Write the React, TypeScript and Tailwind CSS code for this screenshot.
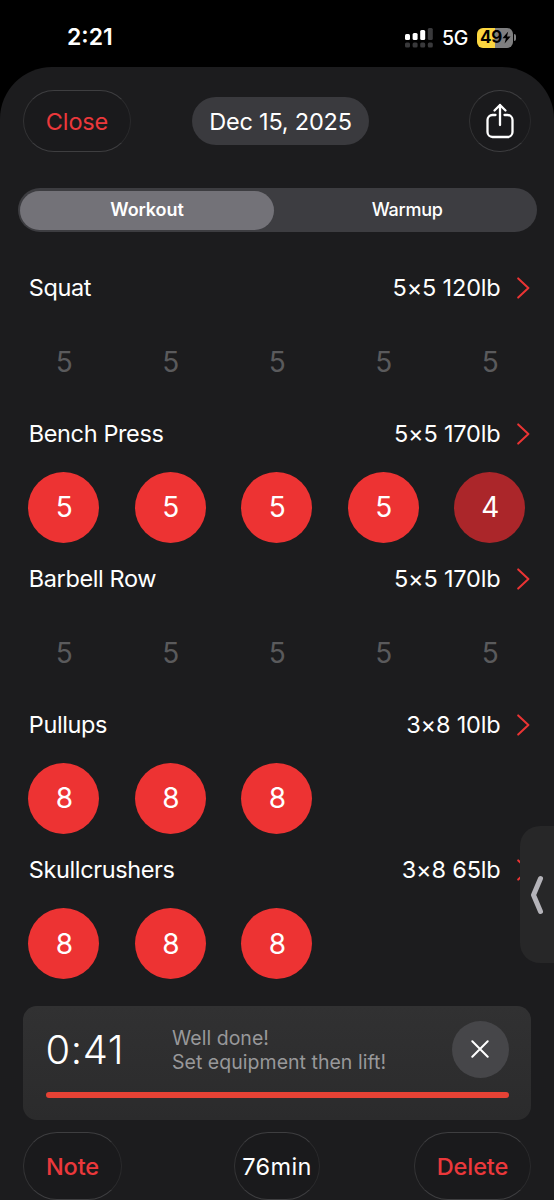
import { useState } from "react";
import { clsx } from "clsx";

type SetState = { reps: number; status: "todo" | "done" | "missed" };
type Exercise = { name: string; load: string; sets: SetState[] };

const repeat = (count: number, reps: number, status: SetState["status"]): SetState[] =>
  Array.from({ length: count }, () => ({ reps, status }));

const EXERCISES: Exercise[] = [
  { name: "Squat", load: "5×5 120lb", sets: repeat(5, 5, "todo") },
  { name: "Bench Press", load: "5×5 170lb", sets: [...repeat(4, 5, "done"), { reps: 4, status: "missed" }] },
  { name: "Barbell Row", load: "5×5 170lb", sets: repeat(5, 5, "todo") },
  { name: "Pullups", load: "3×8 10lb", sets: repeat(3, 8, "done") },
  { name: "Skullcrushers", load: "3×8 65lb", sets: repeat(3, 8, "done") },
];

const glassCls =
  "flex shrink-0 items-center justify-center border border-t-[#3e3e40] border-r-[#2a2a2c] border-b-[#3e3e40] border-l-[#333335] bg-[#1a1a1c]";

function StatusBar() {
  return (
    <div className="flex h-[67px] items-center justify-between pt-2 pr-[38.5px] pl-[67px] text-white">
      <span className="text-[23px] font-semibold">2:21</span>
      <div className="flex items-center">
        <svg width="28" height="20" viewBox="0 0 28 20" fill="#fff">
          <rect x="0" y="6" width="5" height="6" rx="1.5" />
          <rect x="7.6" y="5" width="5" height="7" rx="1.5" />
          <rect x="15.2" y="2" width="5" height="10" rx="1.5" />
          <rect x="22.8" y="0" width="5" height="12" rx="1.5" fill="#39393b" />
          {[0, 7.6, 15.2, 22.8].map((x) => (
            <rect key={x} x={x} y="14.5" width="5" height="5" rx="1.5" fill="#39393b" />
          ))}
        </svg>
        <span className="ml-[9px] w-[26px] pt-0.5 text-[19.5px] font-medium tracking-[-0.4px]">5G</span>
        <div className="mr-px ml-[9px] flex h-5 w-[35.5px] items-center overflow-hidden rounded-[6px] bg-linear-to-r from-[#fbd640] from-50% to-[#7f7f80] to-50% pl-[3px] text-black">
          <span className="text-[17px] font-bold tracking-[-0.3px]">49</span>
          <svg width="9" height="13" viewBox="0 0 9 13" className="shrink-0">
            <path d="M6.2 0.5 0.4 7.2h3.5L2.6 12.5 8.6 5.5H5z" />
          </svg>
        </div>
        <span className="h-[7px] w-[2px] rounded-r-full bg-[#7f7f80]" />
      </div>
    </div>
  );
}

function Chevron() {
  return (
    <svg width="13" height="22" viewBox="0 0 13 22" fill="none" stroke="#eb3434" strokeWidth="2" strokeLinecap="round" strokeLinejoin="round">
      <path d="M1.2 1.4 11.4 11 1.2 20.6" />
    </svg>
  );
}

function ExerciseRow({ name, load, sets }: Exercise) {
  return (
    <div className="h-[145.5px]">
      <div className="flex h-[76px] items-center pl-[0.5px] text-[23.5px] text-white">
        <span className="tracking-[-0.38px]">{name}</span>
        <span className="mr-[16px] ml-auto tracking-[-0.18px]">{load}</span>
        <Chevron />
      </div>
      <div className="flex gap-[35.5px]">
        {sets.map((s, i) => (
          <div
            key={i}
            className={clsx(
              "flex size-[71px] shrink-0 items-center justify-center rounded-full pl-px text-[28px]",
              s.status === "todo" && "text-[#5a5a5c]",
              s.status === "done" && "bg-[#ed3333] text-white",
              s.status === "missed" && "bg-[#ab262a] text-white",
            )}
          >
            {s.reps}
          </div>
        ))}
      </div>
    </div>
  );
}

function RestTimer() {
  return (
    <div className="mx-[23px] h-[114px] shrink-0 rounded-[14px] bg-linear-to-b from-[#313132] to-[#2b2b2c] px-[22.5px] pt-[15px]">
      <div className="flex h-14 items-center">
        <span className="w-[126.5px] pt-0.5 text-[40px] leading-none font-[350] tracking-[0.6px] text-white">0:41</span>
        <p className="pt-px text-[19.5px] leading-6 tracking-[0.03px] text-[#98989a]">
          Well done!
          <br />
          Set equipment then lift!
        </p>
        <button className="ml-auto flex size-[57px] items-center justify-center rounded-full bg-[#464649]">
          <svg width="18" height="18" viewBox="0 0 18 18" stroke="#fff" strokeWidth="2" strokeLinecap="round">
            <path d="M1.3 1.3 16.7 16.7M16.7 1.3 1.3 16.7" />
          </svg>
        </button>
      </div>
      <div className="mt-[15px] h-[6px] rounded-full bg-[#e64235]" />
    </div>
  );
}

export default function App() {
  const [tab, setTab] = useState("Workout");
  return (
    <div className="relative h-[1200px] w-[554px] overflow-hidden bg-black font-[Inter,sans-serif]">
      <StatusBar />
      <div className="flex h-[1133px] flex-col rounded-t-[52px] bg-[#1c1c1e]">
        <header className="flex h-[121px] shrink-0 items-start justify-between px-[23px] pt-[23px]">
          <button className={clsx(glassCls, "h-[62px] w-[108px] rounded-full pt-0.5 text-[23.5px] tracking-[-0.15px] text-[#eb383b]")}>
            Close
          </button>
          <div className="mt-[7px] mr-[38px] ml-auto flex h-[48px] w-[177px] items-center justify-center rounded-full bg-[#3a3a3e] pt-0.5 text-[23.5px] tracking-[-0.22px] text-white">
            Dec 15, 2025
          </div>
          <button className={clsx(glassCls, "ml-[62px] size-[62px] rounded-full")}>
            <svg width="28" height="36" viewBox="0 0 28 36" fill="none" stroke="#fff" strokeWidth="2.3" strokeLinecap="round" strokeLinejoin="round">
              <path d="M9.5 12H6.5A5 5 0 0 0 1.5 17V29A5 5 0 0 0 6.5 34H21.5A5 5 0 0 0 26.5 29V17A5 5 0 0 0 21.5 12H18.5" />
              <path d="M14 22V2M8.5 7.5 14 2 19.5 7.5" />
            </svg>
          </button>
        </header>
        <div className="mr-[17px] ml-[17.5px] flex h-[44px] shrink-0 rounded-full bg-[#3d3d41] p-[2.5px]">
          {["Workout", "Warmup"].map((t) => (
            <button
              key={t}
              onClick={() => setTab(t)}
              className={clsx(
                "h-full rounded-full text-lg text-white",
                tab === t ? "w-[254px] bg-[#737278] font-semibold tracking-[-0.1px]" : "flex-1 pl-1.5 font-medium tracking-[-0.25px]",
              )}
            >
              {t}
            </button>
          ))}
        </div>
        <main className="h-[774px] shrink-0 pt-[18px] pr-[24.5px] pl-[28.3px]">
          {EXERCISES.map((e) => (
            <ExerciseRow key={e.name} {...e} />
          ))}
        </main>
        <RestTimer />
        <footer className="mt-[12px] grid shrink-0 grid-cols-3 px-[23px] text-[23.5px]">
          <button className={clsx(glassCls, "h-[68px] w-[99px] rounded-full pt-0.5 font-medium tracking-[-0.1px] text-[#eb383b]")}>Note</button>
          <div className={clsx(glassCls, "h-[68px] w-[86px] justify-self-center rounded-full pt-0.5 tracking-[0.4px] text-white")}>76min</div>
          <button className={clsx(glassCls, "h-[68px] w-[117px] justify-self-end rounded-full pt-0.5 font-medium tracking-[-0.1px] text-[#eb383b]")}>
            Delete
          </button>
        </footer>
      </div>
      {/* collapsed picture-in-picture tab */}
      <div className="absolute top-[826px] right-0 flex h-[137px] w-[34px] items-center rounded-l-[20px] bg-[#272728] pl-[10px]">
        <svg width="14" height="40" viewBox="0 0 14 40" fill="none" stroke="#b4b3b9" strokeWidth="5" strokeLinecap="round" strokeLinejoin="round">
          <path d="M10.5 3.5 3.5 20 10.5 36.5" />
        </svg>
      </div>
    </div>
  );
}
